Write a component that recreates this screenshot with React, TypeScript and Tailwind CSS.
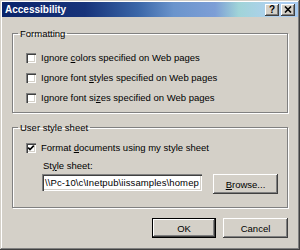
const raised =
  "shadow-[inset_-1px_-1px_0_#404040,inset_1px_1px_0_#ffffff,inset_-2px_-2px_0_#808080]";

function CheckBox({ checked }: { checked?: boolean }) {
  return (
    <span className="flex h-[10px] w-[10px] shrink-0 items-center justify-center bg-white shadow-[inset_1px_1px_0_#808080,inset_2px_2px_0_#404040,inset_-1px_-1px_0_#ffffff,inset_-2px_-2px_0_#d4d0c8]">
      {checked && (
        <svg width="8" height="8" viewBox="0 0 8 8">
          <path d="M1.2 3.6 L3 5.6 L6.8 1.6" fill="none" stroke="#000" strokeWidth="1.6" />
        </svg>
      )}
    </span>
  );
}

function Option({ children, checked }: { children: React.ReactNode; checked?: boolean }) {
  return (
    <div className="flex h-[11px] items-center gap-[5px]">
      <CheckBox checked={checked} />
      <span>{children}</span>
    </div>
  );
}

function Group({ title, children, className }: { title: string; children: React.ReactNode; className?: string }) {
  return (
    <fieldset
      className={`m-0 min-w-0 border border-[#808080] p-0 shadow-[inset_1px_1px_0_#ffffff,1px_1px_0_#ffffff] ${className ?? ""}`}
    >
      <legend className="ml-[5px] px-[2px] leading-[11px]">{title}</legend>
      {children}
    </fieldset>
  );
}

export default function App() {
  return (
    <div className="h-[250px] w-[300px] overflow-hidden bg-[#d4d0c8] p-[2px] font-['Liberation_Sans',Arial,sans-serif] text-[9.5px] leading-[11px] text-black shadow-[inset_-1px_-1px_0_#404040,inset_1px_1px_0_#d4d0c8,inset_-2px_-2px_0_#808080,inset_2px_2px_0_#ffffff]">
      {/* Title bar */}
      <div className="flex h-[15px] items-center justify-between bg-[linear-gradient(90deg,#0a246a_0%,#17337a_28%,#3a66a8_46%,#6a94cc_58%,#7d9ed6_72%,#a0d4d8_80%,#b0d0f0_92%,#a6caf0_100%)] pl-[3px] pr-[3px]">
        <span className="text-[10px] font-bold text-white">Accessibility</span>
        <div className="flex gap-[2px]">
          <span className={`flex h-[12px] w-[14px] items-center justify-center bg-[#d4d0c8] text-[10px] font-bold leading-none ${raised}`}>
            ?
          </span>
          <span className={`flex h-[12px] w-[14px] items-center justify-center bg-[#d4d0c8] ${raised}`}>
            <svg width="8" height="7" viewBox="0 0 8 7">
              <path d="M1 0.5 L7 6.5 M7 0.5 L1 6.5" stroke="#000" strokeWidth="1.6" />
            </svg>
          </span>
        </div>
      </div>

      <div className="px-[10px]">
        <Group title="Formatting" className="mt-[11px]">
          <div className="flex flex-col gap-[9px] pb-[9px] pl-[13px] pt-[13px]">
            <Option>
              Ignore <u>c</u>olors specified on Web pages
            </Option>
            <Option>
              Ignore font <u>s</u>tyles specified on Web pages
            </Option>
            <Option>
              Ignore font si<u>z</u>es specified on Web pages
            </Option>
          </div>
        </Group>

        <Group title="User style sheet" className="mt-[9px]">
          <div className="pb-[13px] pl-[13px] pt-[9px]">
            <Option checked>
              Format <u>d</u>ocuments using my style sheet
            </Option>
            <div className="ml-[16px] mt-[7px]">
              <div className="pl-[1px]">
                St<u>y</u>le sheet:
              </div>
              <div className="mt-[3px] flex items-start gap-[11px]">
                <div className="h-[17px] w-[160px] overflow-hidden whitespace-nowrap bg-white pl-[3px] pt-[3px] tracking-[0.1px] shadow-[inset_1px_1px_0_#808080,inset_2px_2px_0_#404040,inset_-1px_-1px_0_#ffffff,inset_-2px_-2px_0_#d4d0c8]">
                  \\Pc-10\c\Inetpub\iissamples\homep
                </div>
                <div className={`flex h-[20px] w-[65px] items-center justify-center bg-[#d4d0c8] ${raised}`}>
                  <span>
                    <u>B</u>rowse...
                  </span>
                </div>
              </div>
            </div>
          </div>
        </Group>

        <div className="mt-[10px] flex justify-end gap-[7px]">
          <div className="flex h-[20px] w-[64px] items-center justify-center border border-black bg-[#d4d0c8] shadow-[inset_-1px_-1px_0_#404040,inset_1px_1px_0_#ffffff,inset_-2px_-2px_0_#808080]">
            OK
          </div>
          <div className={`flex h-[20px] w-[65px] items-center justify-center bg-[#d4d0c8] ${raised}`}>
            Cancel
          </div>
        </div>
      </div>
    </div>
  );
}
